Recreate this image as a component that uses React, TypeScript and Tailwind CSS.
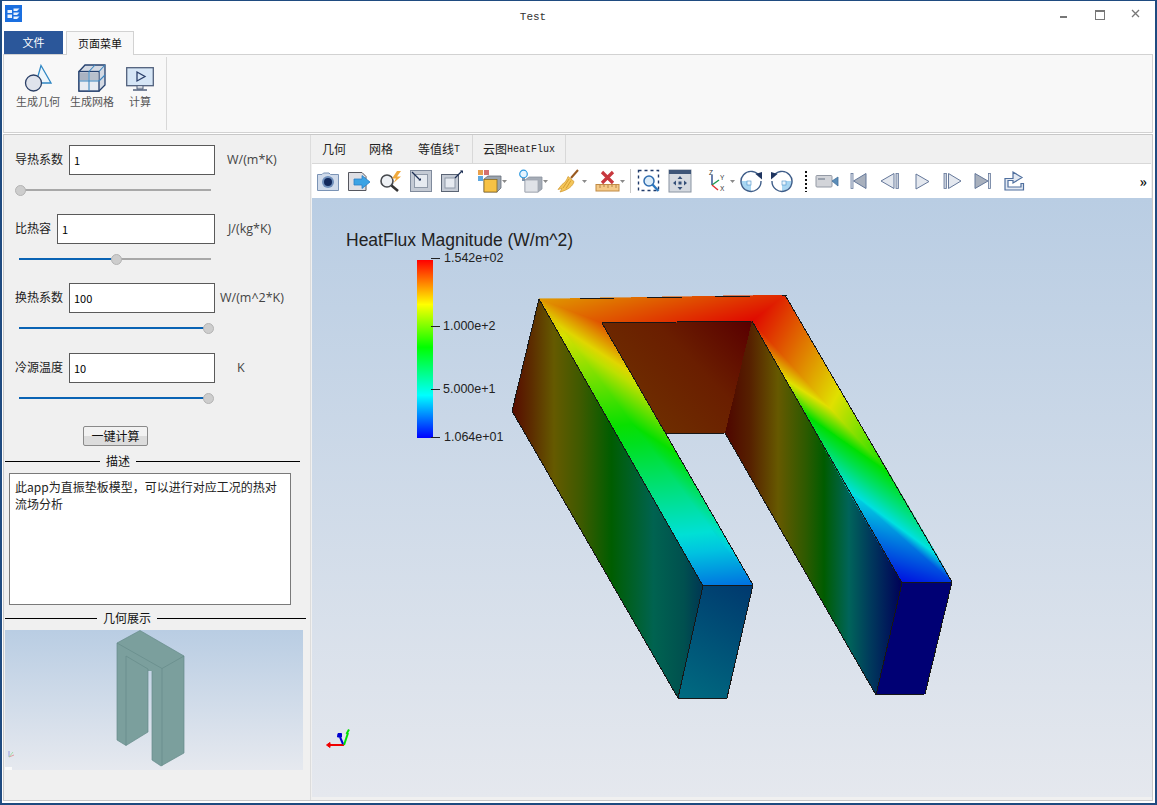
type P = [number, number];

// colour map taken from the scalar bar, t = 0 blue .. 1 red
function cm(t: number, lit = 0.88) {
  const s: [number, number, number, number][] = [
    [0, 0, 0, 255],
    [0.24, 0, 255, 255],
    [0.51, 0, 255, 0],
    [0.75, 255, 255, 0],
    [1, 255, 0, 0],
  ];
  let i = 0;
  while (i < s.length - 2 && t > s[i + 1][0]) i++;
  const k = Math.max(0, Math.min(1, (t - s[i][0]) / (s[i + 1][0] - s[i][0])));
  const c = [1, 2, 3].map((j) => Math.round((s[i][j] + (s[i + 1][j] - s[i][j]) * k) * lit));
  return `rgb(${c[0]},${c[1]},${c[2]})`;
}

const A: P = [539, 299];
const B: P = [785, 295];
const C: P = [952, 582];
const D: P = [902, 583];
const E: P = [752, 321];
const F: P = [602, 323];
const G: P = [703, 586];
const H: P = [753, 585];
const I1: P = [786, 380];
const M1: P = [830, 408];
const O1: P = [840, 390];
const I2: P = [806, 415];
const M2: P = [845, 443];
const O2: P = [889, 473];
const I3: P = [848, 490];
const O3: P = [937, 555];

const tris: [P, number, P, number, P, number][] = [
  // top bar
  [A, 0.83, B, 0.955, E, 0.99],
  [A, 0.83, E, 0.99, F, 0.91],
  // left leg
  [A, 0.83, F, 0.91, H, 0.12],
  [A, 0.83, H, 0.12, G, 0.13],
  // right leg
  [E, 0.99, B, 0.955, M1, 0.75],
  [E, 0.99, M1, 0.75, I1, 0.75],
  [B, 0.955, O1, 0.75, M1, 0.75],
  [I1, 0.75, M1, 0.75, M2, 0.51],
  [I1, 0.75, M2, 0.51, I2, 0.51],
  [M1, 0.75, O1, 0.75, O2, 0.51],
  [M1, 0.75, O2, 0.51, M2, 0.51],
  [I2, 0.51, O2, 0.51, O3, 0.24],
  [I2, 0.51, O3, 0.24, I3, 0.24],
  [I3, 0.24, O3, 0.24, C, 0.06],
  [I3, 0.24, C, 0.06, D, 0.015],
];

function triGradient(t: (typeof tris)[number], id: string) {
  const [p1, s1, p2, s2, p3, s3] = t;
  const det = (p2[0] - p1[0]) * (p3[1] - p1[1]) - (p3[0] - p1[0]) * (p2[1] - p1[1]);
  const a = ((s2 - s1) * (p3[1] - p1[1]) - (s3 - s1) * (p2[1] - p1[1])) / det;
  const b = ((p2[0] - p1[0]) * (s3 - s1) - (p3[0] - p1[0]) * (s2 - s1)) / det;
  const list: [P, number][] = [[p1, s1], [p2, s2], [p3, s3]];
  list.sort((x, y) => x[1] - y[1]);
  const lo = list[0][1];
  const hi = list[2][1];
  const n = a * a + b * b;
  const x2 = list[0][0][0] + (a * (hi - lo)) / n;
  const y2 = list[0][0][1] + (b * (hi - lo)) / n;
  return (
    <linearGradient key={id} id={id} gradientUnits="userSpaceOnUse" x1={list[0][0][0]} y1={list[0][0][1]} x2={x2} y2={y2}>
      {Array.from({ length: 17 }, (_, i) => (
        <stop key={i} offset={i / 16} stopColor={cm(lo + ((hi - lo) * i) / 16)} />
      ))}
    </linearGradient>
  );
}

const pts = (...p: P[]) => p.map((q) => q.join(",")).join(" ");

function Model() {
  const edges: [P, P][] = [
    [A, G], [A, [512, 411]], [[512, 411], [678, 698]], [G, [678, 698]], [G, H], [H, [727, 698]], [[678, 698], [727, 698]],
    [F, E], [F, H], [E, D], [B, C], [D, C], [D, [876, 695]], [C, [925, 694]], [[876, 695], [925, 694]], [[725, 433], [876, 695]],
    [[666, 434], [725, 433]],
  ];
  const dashes: [P, P][] = [
    [[580, 298], [614, 298]], [[647, 297], [682, 297]], [[715, 296], [750, 296]], [[782, 295], [787, 295]],
  ];
  return (
    <svg className="absolute inset-0" width="840" height="599" viewBox="312 198 840 599">
      <defs>
        {tris.map((t, i) => triGradient(t, `tri${i}`))}
        <linearGradient id="sideL" gradientUnits="userSpaceOnUse" x1="512" y1="0" x2="703" y2="0">
          <stop offset="0" stopColor="#570b00" />
          <stop offset="0.1" stopColor="#5c2c00" />
          <stop offset="0.22" stopColor="#655a00" />
          <stop offset="0.36" stopColor="#3e5a00" />
          <stop offset="0.52" stopColor="#005d00" />
          <stop offset="0.74" stopColor="#006350" />
          <stop offset="0.9" stopColor="#00504f" />
          <stop offset="1" stopColor="#003654" />
        </linearGradient>
        <linearGradient id="sideR" gradientUnits="userSpaceOnUse" x1="725" y1="0" x2="902" y2="0">
          <stop offset="0" stopColor="#4e0500" />
          <stop offset="0.14" stopColor="#562000" />
          <stop offset="0.3" stopColor="#665900" />
          <stop offset="0.46" stopColor="#2c5a00" />
          <stop offset="0.56" stopColor="#005c00" />
          <stop offset="0.7" stopColor="#00645a" />
          <stop offset="0.82" stopColor="#003a5c" />
          <stop offset="1" stopColor="#000058" />
        </linearGradient>
        <linearGradient id="back" gradientUnits="userSpaceOnUse" x1="630" y1="440" x2="750" y2="325">
          <stop offset="0" stopColor="#703400" />
          <stop offset="0.6" stopColor="#6a1e00" />
          <stop offset="1" stopColor="#5a0000" />
        </linearGradient>
        <linearGradient id="frontL" gradientUnits="userSpaceOnUse" x1="753" y1="585" x2="685" y2="698">
          <stop offset="0" stopColor="#00386e" />
          <stop offset="1" stopColor="#006a80" />
        </linearGradient>
      </defs>
      <polygon points={pts(F, E, [725, 433], [666, 434])} fill="url(#back)" shapeRendering="crispEdges" />
      <polygon points={pts(E, D, [876, 695], [725, 433])} fill="url(#sideR)" shapeRendering="crispEdges" />
      <polygon points={pts(A, G, [678, 698], [512, 411])} fill="url(#sideL)" shapeRendering="crispEdges" />
      <polygon points={pts(G, H, [727, 698], [678, 698])} fill="url(#frontL)" shapeRendering="crispEdges" />
      <polygon points={pts(D, C, [925, 694], [876, 695])} fill="#000074" shapeRendering="crispEdges" />
      {tris.map((t, i) => (
        <polygon key={i} points={pts(t[0], t[2], t[4])} fill={`url(#tri${i})`} stroke={`url(#tri${i})`} strokeWidth="0.6" shapeRendering="crispEdges" />
      ))}
      {edges.map(([p, q], i) => (
        <line key={i} x1={p[0]} y1={p[1]} x2={q[0]} y2={q[1]} stroke="#171717" strokeWidth="1" shapeRendering="crispEdges" />
      ))}
      {dashes.map(([p, q], i) => (
        <line key={i} x1={p[0]} y1={p[1]} x2={q[0]} y2={q[1]} stroke="#171717" strokeWidth="1" shapeRendering="crispEdges" />
      ))}
      {/* corner axes */}
      <g fill="none" strokeWidth="2">
        <path d="M344 745H330" stroke="#f00000" />
        <path d="M330 742.500L326.500 745L330 747.500Z" fill="#f00000" stroke="#f00000" strokeWidth="1" />
        <path d="M344 745L348 733" stroke="#00e000" />
        <path d="M346.500 734L349 729.500" stroke="#00e000" strokeWidth="2" />
        <path d="M343 744L340 737" stroke="#0000d0" />
        <path d="M337.500 737H341.500V733.500H338Z" fill="#0000d0" stroke="#0000d0" strokeWidth="1" />
      </g>
    </svg>
  );
}

function ScalarBar() {
  const ticks: [number, string, string][] = [
    [258, "1.542e+02", "left-[132px]"],
    [326, "1.000e+2", "left-[131px]"],
    [389, "5.000e+1", "left-[131px]"],
    [437, "1.064e+01", "left-[132px]"],
  ];
  return (
    <>
      <div className="absolute left-[34px] top-[32px] text-[17.500px] leading-5 text-[#222] font-['Liberation_Sans',sans-serif] whitespace-nowrap">
        HeatFlux Magnitude (W/m^2)
      </div>
      <div className="absolute left-[105px] top-[62px] w-4 h-[178px] bg-[linear-gradient(to_top,#0000ff_0%,#00ffff_24%,#00ff00_51%,#ffff00_75%,#ff0000_100%)]" />
      {ticks.map(([y, label, left]) => (
        <div key={label}>
          <div className="absolute left-[119px] w-[9px] h-px bg-[#222]" style={{ top: y - 198 }} />
          <div
            className={`absolute ${left} h-4 leading-4 text-[12.500px] text-[#222] font-['Liberation_Sans',sans-serif] whitespace-nowrap`}
            style={{ top: y - 206 }}
          >
            {label}
          </div>
        </div>
      ))}
    </>
  );
}

function Thumb() {
  return (
    <div className="mt-[5px] w-[298px] h-[140px] bg-[linear-gradient(to_bottom,#b9cde3,#e6e9ef)] relative">
      <svg width="298" height="140" viewBox="5 630 298 140" className="absolute inset-0">
        <polygon
          points="117,643 140,630.500 184,656 184,753 161,766 152,760 152,671 148,671 148,732 126,745.500 117,740"
          fill="#7b9f9d"
        />
        <g fill="none" stroke="#668b89" strokeWidth="0.7">
          <path d="M117 643L162 668.500L184 656M162 668.500V766M126 656V745.500M126 656L148 669V732M117 643V740" />
          <path d="M117 643L140 630.500L184 656V753L161 766L152 760V671M117 740L126 745.500L148 732" />
        </g>
        <g fill="none" strokeWidth="0.8" opacity="0.6">
          <path d="M9 757V751" stroke="#5050d0" />
          <path d="M9 757L14 755" stroke="#e05050" />
          <path d="M9 757L13 752" stroke="#60d060" />
        </g>
        <rect x="5" y="767" width="7" height="3" fill="#fafafa" />
      </svg>
    </div>
  );
}

function Slider({ pos, fill, h = "h-[39px]" }: { pos: string; fill: boolean; h?: string }) {
  return (
    <div className={`${h} pt-[14px]`}>
      <div className="relative ml-[15px] w-[192px] h-[2px] bg-[#a8a8a8]">
        {fill && <div className={`absolute left-0 top-0 h-[2px] bg-[#0a63b4] ${pos === "left-[92px]" ? "w-[92px]" : "w-full"}`} />}
        <div className={`absolute ${pos} -top-[4.500px] w-[11px] h-[11px] rounded-full bg-[#cdcdcd] border border-[#b4b4b4]`} />
      </div>
    </div>
  );
}

function Field({ label, value, unit, inputW, unitMl }: { label: string; value: string; unit: string; inputW: string; unitMl: string }) {
  return (
    <div className="flex items-center h-[30px] pl-[11px]">
      <span className="mb-[2px] text-[12px] text-[#222] whitespace-nowrap">{label}</span>
      <div className={`ml-[6px] h-[30px] ${inputW} bg-white border border-[#5a5a5a] flex items-center pl-[4px] text-[11px] text-black`}>{value}</div>
      <span className={`${unitMl} text-[12.500px] text-[#444] font-['Open_Sans',sans-serif] whitespace-nowrap`}>{unit}</span>
    </div>
  );
}

function Section({ title, w, left }: { title: string; w: string; left: string }) {
  return (
    <div className={`${w} ml-px flex items-center gap-[6px] h-[14px]`}>
      <div className={`${left} h-px bg-black`} />
      <span className="text-[12px] text-[#111] leading-[14px]">{title}</span>
      <div className="flex-1 h-px bg-black" />
    </div>
  );
}

/* ---------- toolbar icons ---------- */

function Caret() {
  return <path d="M25 11H30L27.500 14Z" fill="#8a8a8a" />;
}

const Ic = ({ w = 24, children }: { w?: number; children: React.ReactNode }) => (
  <svg width={w} height="24" viewBox={`0 0 ${w} 24`} className="shrink-0">
    {children}
  </svg>
);

function CameraIcon() {
  return (
    <Ic>
      <path d="M1.500 5.500H6L7.500 4H13L14.500 5.500H22.500V21.500H1.500Z" fill="#cfdaea" stroke="#7a93b5" />
      <circle cx="12" cy="13" r="6" fill="#6f8fbb" />
      <circle cx="12" cy="13" r="4" fill="#12295c" />
    </Ic>
  );
}
function FileArrowIcon() {
  return (
    <Ic>
      <path d="M1.500 3.500H15L19 7.500V21.500H1.500Z" fill="#dfdfe4" stroke="#55565e" />
      <path d="M7 10H15V6.500L23 13L15 19.500V16H7Z" fill="#3ca3e4" stroke="#2a7fc6" strokeWidth="0.8" />
    </Ic>
  );
}
function MagBoltIcon() {
  return (
    <Ic>
      <circle cx="9" cy="12" r="6" fill="#eef1f5" stroke="#45484d" strokeWidth="1.600" />
      <path d="M13.500 16.500L20 22" stroke="#333" strokeWidth="2.500" />
      <path d="M19 2L14 9.500H18L15.500 14L23 7.500H19L23 2Z" fill="#f0a93c" />
    </Ic>
  );
}
function BoxInIcon() {
  return (
    <Ic>
      <rect x="1.500" y="1.500" width="21" height="21" fill="#c4cad4" stroke="#7f8a9c" />
      <rect x="5.500" y="5.500" width="13" height="13" fill="#e6eaf0" stroke="#8f99a8" />
      <path d="M3 3L11 11" stroke="#1e3056" strokeWidth="1.200" />
      <path d="M9.500 11.500H12V9Z" fill="#1e3056" />
    </Ic>
  );
}
function BoxOutIcon() {
  return (
    <Ic>
      <rect x="1.500" y="5.500" width="17" height="17" fill="#c4cad4" stroke="#5a6474" />
      <rect x="5" y="9" width="10" height="10" fill="#e6eaf0" stroke="#8f99a8" />
      <path d="M15 9L22 2" stroke="#1e3056" strokeWidth="1.200" />
      <path d="M20 1.500H23V4.500Z" fill="#1e3056" />
    </Ic>
  );
}
function CubesIcon() {
  return (
    <Ic w={30}>
      <rect x="1" y="1" width="5" height="5" fill="#e8a04c" />
      <rect x="7" y="1" width="5" height="5" fill="#d47070" />
      <rect x="1" y="7" width="5" height="5" fill="#5fa8e0" />
      <path d="M7 10L11 7H24V19L20 23H7Z" fill="#9aa3ad" stroke="#666d78" strokeWidth="0.8" />
      <rect x="7" y="10.500" width="13" height="12.500" fill="#f7c245" stroke="#8a6a20" strokeWidth="0.8" />
      <Caret />
    </Ic>
  );
}
function BulbIcon() {
  return (
    <Ic w={30}>
      <path d="M7 11L11 8H24V20L20 23H7Z" fill="#a5acb6" stroke="#8a929e" strokeWidth="0.8" />
      <rect x="7" y="11" width="13" height="12" fill="#dfe2e7" stroke="#a0a7b2" strokeWidth="0.8" />
      <circle cx="5.500" cy="5" r="3.800" fill="#e6f4ff" stroke="#2f9ae0" strokeWidth="1.200" />
      <rect x="4" y="9" width="3" height="3" fill="#7f93a8" />
      <Caret />
    </Ic>
  );
}
function BroomIcon() {
  return (
    <Ic w={30}>
      <path d="M21 1L14 9" stroke="#9a5a20" strokeWidth="2" />
      <path d="M11 7.500L17 12.500C16 17 11 21 3 23L5 19.500L1 20.500L5 15.500C8 13.500 10 11 11 7.500Z" fill="#f4c65a" stroke="#d0952a" strokeWidth="0.700" />
      <path d="M12 10L6 19M14 11.500L9 19.500" stroke="#c98a1e" strokeWidth="0.700" />
      <Caret />
    </Ic>
  );
}
function RulerIcon() {
  return (
    <Ic w={30}>
      <rect x="1" y="15.500" width="23" height="6.500" fill="#f4c987" stroke="#c08a45" />
      <path d="M5 16V19M9 16V18M13 16V19M17 16V18M21 16V19" stroke="#a8743a" strokeWidth="0.800" />
      <path d="M7 3L18 14M18 3L7 14" stroke="#c8383e" strokeWidth="3.200" />
      <Caret />
    </Ic>
  );
}
function ZoomBoxIcon() {
  return (
    <Ic>
      <rect x="1.500" y="1.500" width="20" height="20" fill="none" stroke="#1f3a6a" strokeWidth="1.400" strokeDasharray="3 3" />
      <circle cx="12" cy="12" r="5" fill="#dcecf8" stroke="#2f6db0" strokeWidth="1.500" />
      <path d="M15.500 15.500L21.500 22" stroke="#2c78bf" strokeWidth="2.400" />
    </Ic>
  );
}
function ResetIcon() {
  return (
    <Ic>
      <rect x="1" y="1" width="22" height="22" fill="#d4d9e0" stroke="#8a94a2" />
      <rect x="1" y="1" width="22" height="4" fill="#3d5578" />
      <path d="M12 7L14.500 10H9.500ZM12 21L9.500 18H14.500ZM5 14L8 11.500V16.500ZM19 14L16 16.500V11.500Z" fill="#355078" />
      <rect x="10.500" y="12.500" width="3" height="3" fill="#355078" />
    </Ic>
  );
}
function AxesIcon() {
  return (
    <Ic w={30}>
      <path d="M7 16V6" stroke="#2a4a8a" strokeWidth="1.400" />
      <path d="M7 16L14 11" stroke="#1f9a50" strokeWidth="1.400" />
      <path d="M7 16L13 21" stroke="#e03030" strokeWidth="1.400" />
      <text x="4" y="5.500" fontSize="6.500" fill="#333" fontFamily="Liberation Sans">Z</text>
      <text x="15" y="11" fontSize="6.500" fill="#333" fontFamily="Liberation Sans">Y</text>
      <text x="15" y="22" fontSize="6.500" fill="#333" fontFamily="Liberation Sans">X</text>
      <Caret />
    </Ic>
  );
}
function RotateIcon({ flip }: { flip?: boolean }) {
  return (
    <Ic>
      <g transform={flip ? "translate(24,0) scale(-1,1)" : undefined}>
        <path d="M12 12H2A10 10 0 0 0 12 22Z" fill="#a8d6f2" />
        <rect x="8" y="12" width="4" height="4" fill="#eaf5fc" stroke="#4a90c8" strokeWidth="0.600" />
        <path d="M21 8A10 10 0 1 0 22 12" fill="none" stroke="#3d5c88" strokeWidth="1.400" />
        <path d="M16.500 5L23 3V10.500Z" fill="#1f3560" />
      </g>
    </Ic>
  );
}
function VideoIcon() {
  return (
    <Ic>
      <rect x="1" y="6.500" width="16" height="11.500" rx="1" fill="#d2d4d9" stroke="#949aa5" />
      <rect x="3" y="9" width="7" height="2" fill="#9aa2ae" />
      <path d="M17 12L23 8V17Z" fill="#5a8db8" stroke="#44709a" strokeWidth="0.800" />
    </Ic>
  );
}
function SkipStartIcon() {
  return (
    <Ic>
      <rect x="5" y="4.500" width="2" height="15" fill="#dfe5ee" stroke="#65789a" strokeWidth="0.800" />
      <path d="M7.500 12L20 4.500V19.500Z" fill="#a8b0bd" stroke="#65789a" />
    </Ic>
  );
}
function StepBackIcon() {
  return (
    <Ic>
      <path d="M3 12L16 4.500V19.500Z" fill="#e4e8ef" stroke="#65789a" />
      <rect x="18" y="4.500" width="2.500" height="15" fill="#c6cedb" stroke="#65789a" strokeWidth="0.800" />
    </Ic>
  );
}
function PlayIcon() {
  return (
    <Ic>
      <path d="M6 5L19 12.500L6 20Z" fill="#e4e8ef" stroke="#65789a" />
    </Ic>
  );
}
function StepFwdIcon() {
  return (
    <Ic>
      <rect x="4" y="4.500" width="2.500" height="15" fill="#c6cedb" stroke="#65789a" strokeWidth="0.800" />
      <path d="M8.500 4.500L21 12L8.500 19.500Z" fill="#e4e8ef" stroke="#65789a" />
    </Ic>
  );
}
function SkipEndIcon() {
  return (
    <Ic>
      <path d="M4 4.500L17 12L4 19.500Z" fill="#a8b0bd" stroke="#65789a" />
      <rect x="17.500" y="4.500" width="2" height="15" fill="#dfe5ee" stroke="#65789a" strokeWidth="0.800" />
    </Ic>
  );
}
function ExportIcon() {
  return (
    <Ic>
      <path d="M3 9.500H11V6V3L20 8.500L11 14V11.500H6V18H19V14.500H21.500V21H3Z" fill="#e3e9f2" stroke="#4f6f9e" strokeWidth="1.200" />
    </Ic>
  );
}

export default function App() {
  return (
    <div className="w-[1157px] h-[805px] overflow-hidden bg-white border border-[#1f4b80] border-l-2 border-b-2 border-r-2 font-['Noto_Sans_CJK_SC',sans-serif] flex flex-col">
      {/* title bar */}
      <div className="h-[30px] shrink-0 relative flex items-center justify-center">
        <svg className="absolute left-[3px] top-[4px]" width="17" height="17" viewBox="0 0 17 17">
          <rect width="17" height="17" fill="#1a6fe0" />
          <path d="M2.500 5H7V8H2.500ZM2.500 9.500H7V13H2.500ZM8.500 3.500H14.500L12 6H8.500ZM8.500 7.500H14.500L12 10H8.500ZM8.500 11.500H14.500L12 14H8.500Z" fill="#e8f2ff" />
        </svg>
        <span className="mt-[3px] text-[11px] text-[#333] font-['Liberation_Mono',monospace] ml-[-91px]">Test</span>
        <div className="absolute left-[1058px] top-[15px] w-[7px] h-[2px] bg-[#777]" />
        <div className="absolute left-[1093px] top-[9px] w-[10px] h-[10px] border border-[#777] border-t-2" />
        <svg className="absolute left-[1129px] top-[8px]" width="9" height="9" viewBox="0 0 9 9">
          <path d="M1 1L8 8M8 1L1 8" stroke="#777" strokeWidth="1.300" />
        </svg>
      </div>

      {/* menu tabs */}
      <div className="h-[24px] shrink-0 flex pl-[2px] relative z-10">
        <div className="w-[59px] h-[23px] bg-[#2b579a] text-white text-[11px] flex items-center justify-center">文件</div>
        <div className="ml-[3px] w-[68px] h-[24px] bg-[#f8f8f8] border border-b-0 border-[#d2d2d2] text-[11px] text-[#111] flex items-center justify-center">页面菜单</div>
      </div>

      {/* ribbon */}
      <div className="h-[79px] shrink-0 mx-px -mt-px bg-[#f8f8f8] border border-[#d2d2d2] flex items-start w-[1150px]">
        <div className="w-[163px] h-[73px] mt-[2px] border-r border-[#d8d8d8] flex pl-[12px] gap-[10px]">
          <div className="w-[44px] flex flex-col items-center">
            <svg width="28" height="28" viewBox="0 0 28 28" className="mt-[7px]">
              <path d="M17 1.500L27 19H12Z" fill="#eef6fc" stroke="#2f87c4" strokeWidth="1.300" />
              <circle cx="9.500" cy="19" r="8" fill="#dfe3ec" stroke="#2a3f66" strokeWidth="1.300" />
            </svg>
            <span className="text-[11px] leading-[14px] mt-[2px] text-[#555] whitespace-nowrap">生成几何</span>
          </div>
          <div className="w-[44px] flex flex-col items-center">
            <svg width="28" height="28" viewBox="0 0 28 28" className="mt-[7px]">
              <path d="M1 7.500L7 1H27V21L21 27H1Z" fill="#d4dae4" stroke="#24406e" strokeWidth="1.300" />
              <rect x="1" y="7.500" width="20" height="19.500" fill="#e8ecf2" stroke="#24406e" strokeWidth="1.300" />
              <rect x="2" y="8.500" width="8.500" height="8" fill="#aab3c2" />
              <rect x="11.500" y="8.500" width="9" height="8" fill="#b8c0cc" />
              <path d="M11 7.500V27M1 17H21M21 7.500L27 1M21 17L27 11M11 7.500L17 1" stroke="#3a86c0" strokeWidth="1.100" fill="none" />
            </svg>
            <span className="text-[11px] leading-[14px] mt-[2px] text-[#555] whitespace-nowrap">生成网格</span>
          </div>
          <div className="w-[32px] flex flex-col items-center">
            <svg width="28" height="25" viewBox="0 0 28 25" className="mt-[10px]">
              <rect x="0.700" y="0.700" width="26.600" height="18" fill="#d6e6f6" stroke="#50607c" strokeWidth="1.300" />
              <path d="M11 5L19 9.500L11 14Z" fill="none" stroke="#2a3f6a" strokeWidth="1.300" />
              <path d="M11 19V22H17V19" fill="#cfd4dc" stroke="#50607c" />
              <path d="M7 23H21" stroke="#50607c" strokeWidth="1.500" />
            </svg>
            <span className="text-[11px] leading-[14px] mt-[2px] text-[#555] whitespace-nowrap">计算</span>
          </div>
        </div>
      </div>

      {/* main */}
      <div className="flex-1 mx-px mt-px mb-[2px] border border-[#c8c8c8] flex w-[1150px] min-h-0 bg-white">
        {/* left panel */}
        <div className="w-[306px] shrink-0 bg-[#f0f0f0] pt-[10px] flex flex-col">
          <Field label="导热系数" value="1" unit="W/(m*K)" inputW="w-[146px]" unitMl="ml-[12px]" />
          <Slider pos="left-[-4px]" fill={false} />
          <Field label="比热容" value="1" unit="J/(kg*K)" inputW="w-[158px]" unitMl="ml-[13px]" />
          <Slider pos="left-[92px]" fill />
          <Field label="换热系数" value="100" unit="W/(m^2*K)" inputW="w-[146px]" unitMl="ml-[5px]" />
          <Slider pos="left-[184px]" fill h="h-[40px]" />
          <Field label="冷源温度" value="10" unit="K" inputW="w-[146px]" unitMl="ml-[22px]" />
          <Slider pos="left-[184px]" fill h="h-[43px]" />
          <button className="ml-[79px] w-[65px] h-[20px] rounded-[2px] border border-[#8a8a8a] bg-[linear-gradient(to_bottom,#f2f2f2_50%,#dcdcdc_50%)] text-[12px] leading-none text-[#111]">
            一键计算
          </button>
          <div className="mt-[8px]">
            <Section title="描述" w="w-[295px]" left="w-[95px]" />
          </div>
          <div className="mt-[5px] ml-[5px] w-[282px] h-[132px] bg-white border border-[#7a7a7a] px-[5px] pt-[4px] text-[12px] leading-[17px] text-[#222]">
            此app为直振垫板模型，可以进行对应工况的热对流场分析
          </div>
          <div className="mt-[6px]">
            <Section title="几何展示" w="w-[301px]" left="w-[92px]" />
          </div>
          <div className="ml-px">
            <Thumb />
          </div>
        </div>

        {/* right panel */}
        <div className="flex-1 min-w-0 flex flex-col border-l border-[#dcdcdc] pl-[1px] bg-[#f0f0f0] pr-px">
          <div className="h-[29px] shrink-0 flex items-stretch bg-[#f0f0f0] border-b border-[#d8d8d8] text-[12px] text-[#222]">
            <div className="w-[34px] flex items-center justify-end">几何</div>
            <div className="ml-[23px] w-[25px] flex items-center">网格</div>
            <div className="ml-[24px] w-[54px] flex items-center whitespace-nowrap">
              等值线<span className="font-['Liberation_Mono',monospace] text-[10px]">T</span>
            </div>
            <div className="w-[94px] border-l border-r border-[#d8d8d8] flex items-center justify-center whitespace-nowrap">
              云图<span className="font-['Liberation_Mono',monospace] text-[10px]">HeatFlux</span>
            </div>
          </div>
          <div className="h-[34px] shrink-0 bg-white flex items-center pl-[4px] gap-[7px]">
            <CameraIcon />
            <FileArrowIcon />
            <MagBoltIcon />
            <BoxInIcon />
            <BoxOutIcon />
            <div className="ml-[6px]"><CubesIcon /></div>
            <div className="ml-[4px]"><BulbIcon /></div>
            <div className="ml-[2px]"><BroomIcon /></div>
            <div className="ml-[1px]"><RulerIcon /></div>
            <div className="-ml-[2px] w-px h-[24px] bg-[#c8c8c8]" />
            <div className="-ml-px"><ZoomBoxIcon /></div>
            <ResetIcon />
            <div className="ml-[6px]"><AxesIcon /></div>
            <div className="-ml-[3px]"><RotateIcon /></div>
            <RotateIcon flip />
            <div className="ml-[4px] w-[2px] h-[21px] bg-[repeating-linear-gradient(to_bottom,#111_0,#111_2px,transparent_2px,transparent_4px)]" />
            <div className="ml-px"><VideoIcon /></div>
            <SkipStartIcon />
            <div className="ml-px"><StepBackIcon /></div>
            <div className="ml-px"><PlayIcon /></div>
            <div className="-ml-px"><StepFwdIcon /></div>
            <SkipEndIcon />
            <ExportIcon />
            <span className="ml-auto mr-[4px] text-[14px] font-bold text-[#111] leading-none">»</span>
          </div>
          <div className="relative w-[840px] h-[599px] bg-[linear-gradient(to_bottom,#b9cde3,#e5e8ee)] overflow-hidden">
            <Model />
            <ScalarBar />
          </div>
        </div>
      </div>
    </div>
  );
}
